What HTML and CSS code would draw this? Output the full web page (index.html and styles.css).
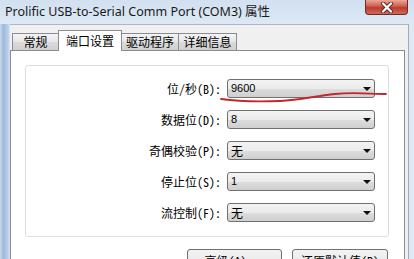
FILE: index.html
```html
<!DOCTYPE html>
<html>
<head>
<meta charset="utf-8">
<link rel="stylesheet" href="styles.css">
</head>
<body>
<div class="window">
  <div class="titlebar">
    <span class="title">Prolific USB-to-Serial Comm Port (COM3) 属性</span>
    <div class="close">
      <svg width="14" height="11" viewBox="0 0 14 11">
        <path d="M3 1.5 L11 9.5 M11 1.5 L3 9.5" stroke="#5a2a26" stroke-width="4" stroke-linecap="round" fill="none"/>
        <path d="M3 1.5 L11 9.5 M11 1.5 L3 9.5" stroke="#ffffff" stroke-width="2.2" stroke-linecap="round" fill="none"/>
      </svg>
    </div>
  </div>
  <div class="body">
    <div class="frame-left"></div>
    <div class="client">
      <div class="tabs">
        <div class="tab t1">常规</div>
        <div class="tab sel">端口设置</div>
        <div class="tab t3">驱动程序</div>
        <div class="tab t4">详细信息</div>
      </div>
      <div class="page">
        <div class="group">
          <div class="grid">
            <div class="label">位/秒(B):</div>
            <div class="combo"><span class="val num">9600</span><i class="arrow"></i></div>
            <div class="label">数据位(D):</div>
            <div class="combo"><span class="val num">8</span><i class="arrow"></i></div>
            <div class="label">奇偶校验(P):</div>
            <div class="combo"><span class="val">无</span><i class="arrow"></i></div>
            <div class="label">停止位(S):</div>
            <div class="combo"><span class="val num">1</span><i class="arrow"></i></div>
            <div class="label">流控制(F):</div>
            <div class="combo"><span class="val">无</span><i class="arrow"></i></div>
          </div>
        </div>
        <div class="buttons">
          <div class="btn b1">高级(A)...</div>
          <div class="btn b2">还原默认值(R)</div>
        </div>
      </div>
    </div>
    <div class="frame-right"></div>
  </div>
  <svg class="scribble" width="414" height="259" viewBox="0 0 414 259">
    <path d="M221 99 C235 101 255 102 280 101 C300 100 315 96 335 94 C355 92 370 94 386 94" stroke="#c4262b" stroke-width="1.8" fill="none" stroke-linecap="round"/>
  </svg>
</div>
</body>
</html>
```

FILE: styles.css
```css
* { box-sizing: border-box; }
html, body { margin: 0; padding: 0; }
body {
  width: 414px;
  height: 259px;
  overflow: hidden;
  background: #dce7f3;
  font-family: "Noto Sans Mono CJK SC", "Noto Sans CJK SC", sans-serif;
  font-size: 12px;
  color: #000;
}
.window {
  position: relative;
  width: 414px;
  height: 259px;
  display: flex;
  flex-direction: column;
}
.titlebar {
  height: 24px;
  flex: none;
  display: flex;
  align-items: flex-start;
  padding-left: 5px;
  background: linear-gradient(#d2e0f0, #dde8f4);
}
.title {
  font-family: "Noto Sans", "Noto Sans CJK SC", sans-serif;
  font-size: 12.5px;
  line-height: 14px;
  margin-top: 5px;
  color: #1a1a1a;
  white-space: nowrap;
}
.close {
  margin-left: auto;
  margin-right: 6px;
  width: 43px;
  height: 15px;
  border: 1px solid #6e2a24;
  border-top: none;
  border-radius: 0 0 4px 4px;
  background: linear-gradient(#e8a898, #cf5a4c 45%, #bb3a2e 55%, #d06a58);
  display: flex;
  align-items: center;
  justify-content: center;
}
.body {
  flex: 1;
  display: flex;
  min-height: 0;
}
.frame-left {
  width: 10px;
  flex: none;
  background: linear-gradient(to right, #c8daee, #9fbadb 35%, #bcd1e8 80%, #d6e3f1);
}
.client {
  width: 399px;
  flex: none;
  background: #f0f0f0;
  border-top: 1px solid #a9b8c9;
  border-right: 1px solid #a0acbb;
  padding-top: 5px;
  display: flex;
  flex-direction: column;
}
.frame-right {
  flex: 1;
  background: #dfe9f4;
}
.tabs {
  height: 20px;
  display: flex;
  align-items: flex-start;
  padding-left: 2px;
  flex: none;
}
.tab {
  height: 17px;
  margin-top: 3px;
  border: 1px solid #898c95;
  border-bottom: none;
  border-right: none;
  background: linear-gradient(#f4f4f4, #e6e6e6 50%, #dadada 51%, #d0d0d0);
  display: flex;
  align-items: center;
  justify-content: center;
  line-height: 1;
  font-size: 12px;
}
.t1 { width: 46px; }
.sel {
  width: 64px;
  height: 21px;
  margin-top: 0;
  border-right: 1px solid #898c95;
  background: #fff;
  position: relative;
  z-index: 1;
  padding-bottom: 1px;
}
.t3 { width: 56px; border-left: none; }
.t4 { width: 59px; border-right: 1px solid #898c95; }
.page {
  flex: 1;
  margin-right: 3px;
  border: 1px solid #898c95;
  background: #fff;
  padding: 14px 15px 0 14px;
}
.group {
  height: 172px;
  border: 1px solid #d5dfe5;
  border-radius: 3px;
  padding: 13px 13px 0 0;
}
.grid {
  display: grid;
  grid-template-columns: 1fr 148px;
  column-gap: 6px;
  row-gap: 12px;
  grid-auto-rows: 19px;
}
.label {
  display: flex;
  align-items: center;
  justify-content: flex-end;
  white-space: nowrap;
  font-size: 12px;
}
.combo {
  display: flex;
  align-items: center;
  border: 1px solid #707070;
  border-radius: 3px;
  background: linear-gradient(#f3f3f3, #ebebeb 50%, #dddddd 51%, #cfcfcf);
  padding-left: 3px;
}
.val { font-size: 12px; line-height: 1; }
.val.num { font-family: "Liberation Sans", sans-serif; font-size: 11px; }
.arrow {
  margin-left: auto;
  margin-right: 3px;
  width: 0;
  height: 0;
  border-left: 4px solid transparent;
  border-right: 4px solid transparent;
  border-top: 4px solid #111;
}
.buttons {
  margin-top: 12px;
  display: flex;
  justify-content: flex-end;
  gap: 10px;
  padding-right: 1px;
}
.btn {
  height: 23px;
  border: 1px solid #707070;
  border-radius: 3px;
  background: linear-gradient(#f3f3f3, #ebebeb 50%, #dddddd 51%, #cfcfcf);
  display: flex;
  align-items: center;
  justify-content: center;
  font-size: 12px;
}
.b1 { width: 95px; }
.b2 { width: 96px; }
.scribble {
  position: absolute;
  left: 0;
  top: 0;
  pointer-events: none;
}
```
